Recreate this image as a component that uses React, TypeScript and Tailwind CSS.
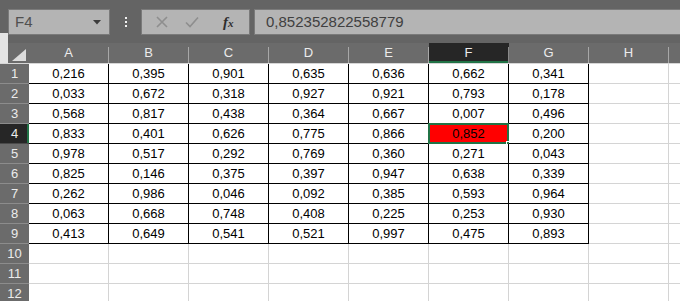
import React from "react";

const COLS = ["A", "B", "C", "D", "E", "F", "G", "H"];

const DATA: string[][] = [
  ["0,216", "0,395", "0,901", "0,635", "0,636", "0,662", "0,341"],
  ["0,033", "0,672", "0,318", "0,927", "0,921", "0,793", "0,178"],
  ["0,568", "0,817", "0,438", "0,364", "0,667", "0,007", "0,496"],
  ["0,833", "0,401", "0,626", "0,775", "0,866", "0,852", "0,200"],
  ["0,978", "0,517", "0,292", "0,769", "0,360", "0,271", "0,043"],
  ["0,825", "0,146", "0,375", "0,397", "0,947", "0,638", "0,339"],
  ["0,262", "0,986", "0,046", "0,092", "0,385", "0,593", "0,964"],
  ["0,063", "0,668", "0,748", "0,408", "0,225", "0,253", "0,930"],
  ["0,413", "0,649", "0,541", "0,521", "0,997", "0,475", "0,893"],
];

function FormulaBar() {
  return (
    <div className="flex h-[43px] items-start bg-[#646464] pt-[9px] pl-[8px]">
      {/* name box */}
      <div className="flex h-[26px] w-[102px] items-center justify-between border border-[#7a7a7a] bg-[#b4b4b4] pl-[6px] pr-[8px]">
        <span className="text-[15px] text-[#505050]">F4</span>
        <svg width="8" height="5" viewBox="0 0 8 5">
          <path d="M0 0 H8 L4 4.5 Z" fill="#3c3c3c" />
        </svg>
      </div>
      <div className="ml-[15px] mr-[14px] flex h-[26px] flex-col items-center justify-center gap-[2px]">
        <span className="h-[2px] w-[2px] bg-[#f2f2f2]" />
        <span className="h-[2px] w-[2px] bg-[#f2f2f2]" />
        <span className="h-[2px] w-[2px] bg-[#f2f2f2]" />
      </div>
      {/* cancel / enter / fx */}
      <div className="flex h-[26px] w-[109px] items-center border border-[#7a7a7a] bg-[#b4b4b4]">
        <svg width="12" height="12" viewBox="0 0 12 12" className="ml-[14px]">
          <path d="M1 1 L11 11 M11 1 L1 11" stroke="#8e8e8e" strokeWidth="1.6" />
        </svg>
        <svg width="14" height="12" viewBox="0 0 14 12" className="ml-[17px]">
          <path d="M1 6.5 L5 10.5 L13 1.5" stroke="#8e8e8e" strokeWidth="1.6" fill="none" />
        </svg>
        <span className="ml-[24px] font-['Liberation_Serif',serif] text-[15px] font-bold italic leading-none text-[#2e2e2e]">
          f<span className="text-[11px]">x</span>
        </span>
      </div>
      <div className="ml-[4px] flex h-[26px] flex-1 items-center border border-r-0 border-[#7a7a7a] bg-[#b4b4b4] pl-[11px]">
        <span className="text-[15px] text-[#404040]">0,852352822558779</span>
      </div>
    </div>
  );
}

function HeaderRow() {
  return (
    <div className="flex h-[21px] border-b border-[#d6d6d6] bg-[#6b6b6b]">
      <div className="flex w-[29px] items-end justify-end pr-[3px] pb-[2px]">
        <svg width="14" height="12" viewBox="0 0 14 12">
          <path d="M14 0 V12 H0 Z" fill="#dcdcdc" />
        </svg>
      </div>
      {COLS.map((c) => {
        const sel = c === "F";
        return (
          <div
            key={c}
            className={`flex w-[80px] items-stretch ${sel ? "bg-[#262626] shadow-[inset_0_-2px_0_#217346]" : ""}`}
          >
            <div className="flex flex-1 items-center justify-center text-[13px] text-[#ececec]">{c}</div>
            <div className={`mt-[4px] w-px ${sel ? "bg-[#8a8a8a]" : "bg-[#a8a8a8]"}`} />
          </div>
        );
      })}
      <div className="flex-1" />
    </div>
  );
}

function Row({ n }: { n: number }) {
  const values = DATA[n - 1];
  const inData = n <= 9;
  const selRow = n === 4;
  return (
    <div className="flex h-[20px]">
      <div
        className={`flex w-[29px] items-center justify-center border-b text-[13px] text-[#ececec] ${
          selRow
            ? "border-b-[#4a4a4a] bg-[#262626] shadow-[inset_-2px_0_0_#217346]"
            : "border-b-[#8c8c8c] bg-[#6b6b6b]"
        }`}
      >
        {n}
      </div>
      {COLS.map((c, i) => {
        const data = inData && i < 7;
        const sel = selRow && c === "F";
        const right = data ? "border-r-black" : "border-r-[#d4d4d4]";
        const bottom = data ? "border-b-black" : "border-b-[#d4d4d4]";
        return (
          <div
            key={c}
            className={`relative flex w-[80px] items-center justify-center border-r border-b ${right} ${bottom} ${
              sel ? "bg-[#ff0000]" : "bg-white"
            } text-[13px] text-black`}
          >
            {values && i < 7 ? values[i] : null}
            {sel && (
              <>
                <div className="absolute -top-[1px] -left-[1px] -right-[1px] -bottom-[1px] border-2 border-[#217346]" />
                <div className="absolute -right-[4px] -bottom-[4px] h-[6px] w-[6px] border border-white bg-[#217346]" />
              </>
            )}
          </div>
        );
      })}
      <div className="flex-1 border-b border-[#d4d4d4] bg-white" />
    </div>
  );
}

export default function App() {
  return (
    <div className="relative h-[301px] w-[680px] overflow-hidden bg-white font-['Liberation_Sans',Arial,sans-serif]">
      <FormulaBar />
      <HeaderRow />
      {Array.from({ length: 12 }, (_, i) => (
        <Row key={i} n={i + 1} />
      ))}
      {/* light strip from the window behind */}
      <div className="absolute top-[33px] left-0 h-[30px] w-[8px] bg-[#e4e4e4]" />
    </div>
  );
}
